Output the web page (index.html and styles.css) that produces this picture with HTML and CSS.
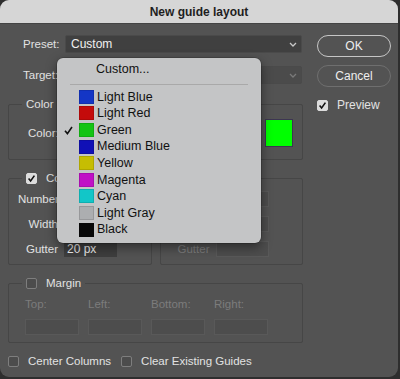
FILE: index.html
```html
<!DOCTYPE html>
<html lang="en">
<head>
    <meta charset="UTF-8">
    <title>New guide layout</title>
    <link rel="stylesheet" href="styles.css">
</head>
<body>
<div class="window">
    <div class="titlebar">New guide layout</div>

    <div class="content">
        <div class="main">
            <div class="field">
                <span class="field-label">Preset:</span>
                <div class="select">
                    <span>Custom</span>
                    <svg class="chevron" width="8" height="5" viewBox="0 0 8 5"><path d="M1 1 L4 4 L7 1" fill="none" stroke="#c8c8c8" stroke-width="1.3"/></svg>
                </div>
            </div>
            <div class="field">
                <span class="field-label">Target:</span>
                <div class="select disabled">
                    <span></span>
                    <svg class="chevron" width="8" height="5" viewBox="0 0 8 5"><path d="M1 1 L4 4 L7 1" fill="none" stroke="#7a7a7a" stroke-width="1.3"/></svg>
                </div>
            </div>

            <fieldset class="group">
                <legend>Color</legend>
                <div class="color-row">
                    <span>Color:</span>
                    <span class="big-swatch"></span>
                </div>
            </fieldset>

            <div class="split">
                <fieldset class="group">
                    <legend><span class="check on"></span>Columns</legend>
                    <div class="grid">
                        <span class="lbl">Number</span><span class="input"></span>
                        <span class="lbl">Width</span><span class="input"></span>
                        <span class="lbl">Gutter</span><span class="input">20 px</span>
                    </div>
                </fieldset>
                <fieldset class="group">
                    <legend><span class="check"></span>Rows</legend>
                    <div class="grid off">
                        <span class="lbl">Number</span><span class="input"></span>
                        <span class="lbl">Height</span><span class="input"></span>
                        <span class="lbl">Gutter</span><span class="input"></span>
                    </div>
                </fieldset>
            </div>

            <fieldset class="group">
                <legend><span class="check"></span>Margin</legend>
                <div class="margins">
                    <span>Top:</span><span>Left:</span><span>Bottom:</span><span>Right:</span>
                    <span class="input"></span><span class="input"></span><span class="input"></span><span class="input"></span>
                </div>
            </fieldset>

            <div class="footer">
                <span class="opt"><span class="check"></span>Center Columns</span>
                <span class="opt"><span class="check"></span>Clear Existing Guides</span>
            </div>
        </div>

        <div class="side">
            <div class="btn primary">OK</div>
            <div class="btn">Cancel</div>
            <span class="opt preview"><span class="check on"></span>Preview</span>
        </div>
    </div>

    <div class="menu">
        <div class="menu-item plain">Custom...</div>
        <div class="sep"></div>
        <div class="menu-item"><span class="tick"></span><span class="sw" style="background:#1436c6"></span>Light Blue</div>
        <div class="menu-item"><span class="tick"></span><span class="sw" style="background:#c40b0b"></span>Light Red</div>
        <div class="menu-item"><span class="tick"><svg width="9" height="9" viewBox="0 0 9 9"><path d="M1 4.8 L3.4 7.6 L8 1" fill="none" stroke="#111" stroke-width="1.6"/></svg></span><span class="sw" style="background:#14c414"></span>Green</div>
        <div class="menu-item"><span class="tick"></span><span class="sw" style="background:#1010b6"></span>Medium Blue</div>
        <div class="menu-item"><span class="tick"></span><span class="sw" style="background:#c6bd02"></span>Yellow</div>
        <div class="menu-item"><span class="tick"></span><span class="sw" style="background:#c010c6"></span>Magenta</div>
        <div class="menu-item"><span class="tick"></span><span class="sw" style="background:#12c6c8"></span>Cyan</div>
        <div class="menu-item"><span class="tick"></span><span class="sw" style="background:#acaeb0"></span>Light Gray</div>
        <div class="menu-item"><span class="tick"></span><span class="sw" style="background:#080808"></span>Black</div>
    </div>
</div>
</body>
</html>
```

FILE: styles.css
```css
html, body {
    margin: 0;
    padding: 0;
    background: #2e2e2e;
}

body {
    font-family: "Liberation Sans", Arial, sans-serif;
    font-size: 11.5px;
    color: #e2e2e2;
}

.window {
    position: relative;
    width: 398px;
    height: 377px;
    background: #535353;
    border-radius: 9px;
    overflow: hidden;
}

.titlebar {
    height: 23px;
    line-height: 24px;
    background: #d6d6d6;
    border-bottom: 1px solid #444;
    color: #1e1e1e;
    font-weight: bold;
    font-size: 12px;
    text-align: center;
}

.content {
    display: flex;
    padding: 11px 0 0 8px;
}

.main {
    width: 295px;
}

.side {
    width: 74px;
    margin-left: 14px;
    display: flex;
    flex-direction: column;
}

/* preset / target rows */
.field {
    display: flex;
    align-items: center;
    height: 18px;
    padding-left: 15px;
    margin-bottom: 13px;
}

.field-label {
    width: 42px;
}

.select {
    flex: 1;
    height: 16px;
    margin-right: 1px;
    background: #404040;
    border: 1px solid #4a4a4a;
    border-radius: 2px;
    display: flex;
    align-items: center;
    justify-content: space-between;
    padding: 0 4px 0 5px;
    color: #f0f0f0;
    font-size: 12px;
}

.select.disabled {
    background: #4b4b4b;
    color: #7a7a7a;
}

/* group boxes */
.group {
    margin: 0;
    padding: 0 9px 7px 9px;
    border: 1px solid #464646;
    border-radius: 2px;
    min-width: 0;
}

.group + .split,
.split + .group {
    margin-top: 11px;
}

.group legend {
    margin-left: 4px;
    padding: 0 4px;
    height: 14px;
    line-height: 14px;
    display: flex;
    align-items: center;
}

.color-row {
    display: flex;
    align-items: center;
    justify-content: space-between;
    padding: 8px 0 5px 10px;
}

.big-swatch {
    width: 26px;
    height: 26px;
    background: #00ff00;
    border: 1px solid #3d3552;
}

.split {
    display: flex;
    gap: 8px;
}

.split .group {
    flex: 1;
}

.grid {
    display: grid;
    grid-template-columns: 40px 53px;
    column-gap: 6px;
    row-gap: 9px;
    padding-top: 6px;
}

.grid .lbl {
    text-align: right;
    line-height: 16px;
}

.input {
    height: 16px;
    line-height: 16px;
    background: #3e3e3e;
    padding-left: 3px;
    color: #eee;
    font-size: 12px;
    box-sizing: border-box;
}

.grid.off .lbl,
.margins span {
    color: #7c7c7c;
}

.grid.off .input,
.margins .input {
    background: #4d4d4d;
    border: 1px solid #595959;
}

.margins {
    display: grid;
    grid-template-columns: repeat(4, 54px);
    column-gap: 9px;
    row-gap: 8px;
    padding: 7px 0 0 7px;
    line-height: 14px;
}

/* checkboxes */
.check {
    display: inline-block;
    width: 11px;
    height: 11px;
    box-sizing: border-box;
    border: 1px solid #7e7e7e;
    background: #4c4c4c;
    border-radius: 2px;
    margin-right: 9px;
}

.check.on {
    border-color: #dcdcdc;
    background: #dcdcdc url("data:image/svg+xml,%3Csvg xmlns='http://www.w3.org/2000/svg' width='9' height='9' viewBox='0 0 9 9'%3E%3Cpath d='M1.6 4.6 L3.6 7 L7.4 1.6' fill='none' stroke='%23111' stroke-width='1.6'/%3E%3C/svg%3E") center no-repeat;
}

.opt {
    display: inline-flex;
    align-items: center;
    height: 14px;
}

.footer {
    margin-top: 11px;
    display: flex;
    gap: 10px;
}

/* buttons */
.btn {
    height: 20px;
    line-height: 20px;
    border: 1.5px solid #6f6f6f;
    border-radius: 12px;
    text-align: center;
    color: #eee;
    margin-bottom: 8px;
    font-size: 12px;
}

.btn.primary {
    border-color: #c6c6c6;
}

.preview {
    margin-top: 3px;
    font-size: 12px;
}

/* color popup menu */
.menu {
    position: absolute;
    left: 57px;
    top: 58px;
    width: 204px;
    padding: 3px 0 5px;
    background: #c4c5c6;
    border-radius: 6px;
    box-shadow: 0 4px 12px rgba(0, 0, 0, 0.45), 0 0 0 0.5px rgba(0, 0, 0, 0.3);
    color: #111;
    font-size: 12.5px;
    box-sizing: border-box;
}

.menu-item {
    height: 16.6px;
    line-height: 16.6px;
    display: flex;
    align-items: center;
    padding-left: 7px;
}

.menu-item.plain {
    padding-left: 39px;
}

.sep {
    height: 1px;
    background: #a9a9a9;
    margin: 6px 13px 4px;
}

.tick {
    width: 9px;
    height: 9px;
    margin-right: 6px;
    display: flex;
}

.sw {
    width: 15px;
    height: 14px;
    box-sizing: border-box;
    border: 1px solid rgba(0, 0, 0, 0.12);
    margin-right: 3px;
}
```
